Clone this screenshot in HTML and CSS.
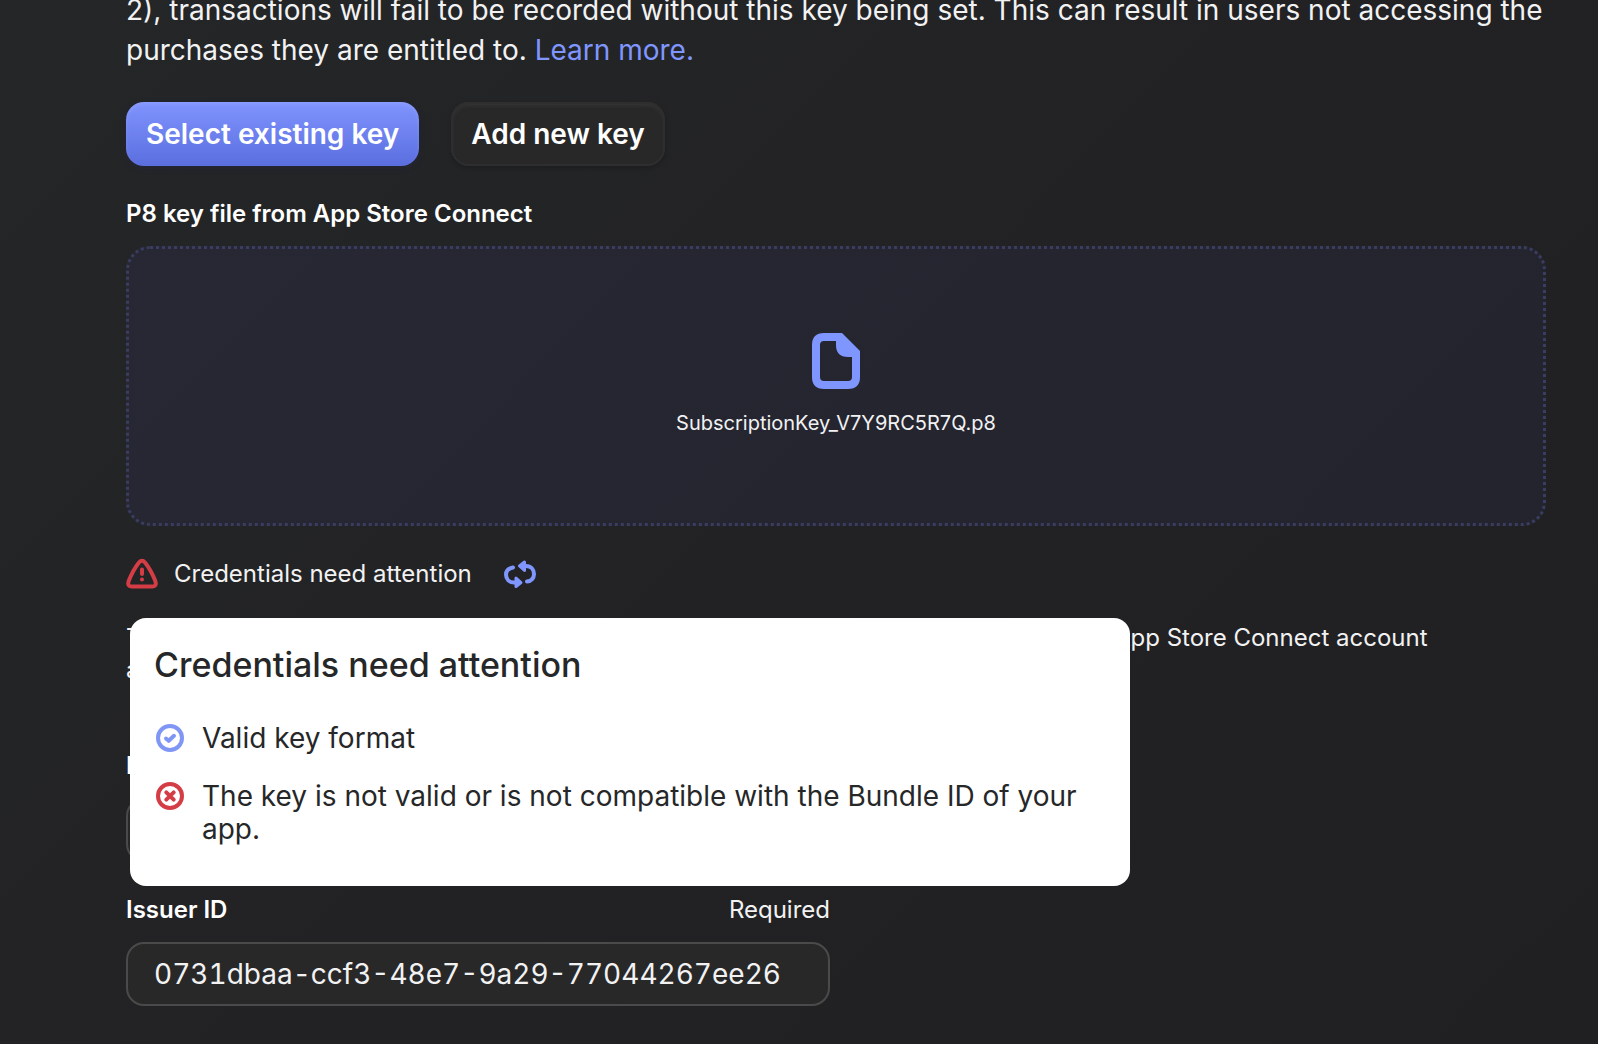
FILE: index.html
```html
<!DOCTYPE html>
<html lang="en">
<head>
<meta charset="UTF-8">
<meta name="viewport" content="width=device-width, initial-scale=1.0">
<title>In-app purchase key configuration</title>
<link rel="stylesheet" href="styles.css">
</head>
<body>

<main class="container">
    <p class="intro">2), transactions will fail to be recorded without this key being set. This can result in users not accessing the purchases they are entitled to. <a href="#learn-more">Learn more.</a></p>

    <div class="buttons">
        <button type="button" class="btn btn-primary">Select existing key</button>
        <button type="button" class="btn btn-secondary">Add new key</button>
    </div>

    <h3 class="label" id="fileLabel">P8 key file from App Store Connect</h3>
    <button type="button" class="dropzone" aria-describedby="fileLabel">
        <svg class="file-icon" width="48" height="56" viewBox="0 0 48 56" aria-hidden="true">
            <path fill="#8096ff" fill-rule="evenodd" d="M12 0H30L48 18V44Q48 56 36 56H12Q0 56 0 44V12Q0 0 12 0ZM12 8Q8 8 8 12V44Q8 48 12 48H36Q40 48 40 44V24H36Q24 24 24 12V8Z"/>
        </svg>
        <span>SubscriptionKey_V7Y9RC5R7Q.p8</span>
    </button>

    <div class="status">
        <svg width="32" height="32" viewBox="0 0 32 32" fill="none" stroke="#d43d46" stroke-width="4" stroke-linecap="round" stroke-linejoin="round" aria-hidden="true">
            <path d="M13 4.5Q16 1 19 4.5Q25 12 29.3 23Q31 28.500 26.500 28.500H5.500Q1 28.500 2.700 23Q7 12 13 4.500Z"/>
            <path d="M16 11.500V16M16 21.500V21.600"/>
        </svg>
        <span>Credentials need attention</span>
        <button type="button" class="refresh" aria-label="Check again">
            <svg width="32" height="32" viewBox="0 0 32 32" fill="none" stroke="#8096ff" stroke-width="4" stroke-linecap="round" stroke-linejoin="round" aria-hidden="true">
                <path d="M9 9.500C4.500 10.500 2 13 2 16.500C2 21 5 24.500 10 24.500H12M23 23.500C27.500 23 30 20 30 16C30 11.500 27 8 22 8H20"/>
                <path fill="#8096ff" stroke-width="3" d="M20.500 4L15.500 8L20.500 12.500ZM12 20L17 24.500L12 28.500Z"/>
            </svg>
        </button>

        <div class="tooltip" role="tooltip">
            <h2>Credentials need attention</h2>
            <ul>
                <li>
                    <svg width="32" height="32" viewBox="0 0 32 32" fill="none" stroke="#8096f5" stroke-width="4" stroke-linecap="round" stroke-linejoin="round" aria-hidden="true">
                        <circle cx="16" cy="16" r="12"/>
                        <path d="M12 16.500L14.700 18.800L20 13.800"/>
                    </svg>
                    <span>Valid key format</span>
                </li>
                <li>
                    <svg width="32" height="32" viewBox="0 0 32 32" fill="none" stroke="#d43d46" stroke-width="4" stroke-linecap="round" aria-hidden="true">
                        <circle cx="16" cy="16" r="12"/>
                        <path d="M12.300 12.300L19.700 19.700M19.700 12.300L12.300 19.700"/>
                    </svg>
                    <span>The key is not valid or is not compatible with the Bundle ID of your app.</span>
                </li>
            </ul>
        </div>
    </div>

    <p class="help">The Key ID is read from the name of the file, and the Issuer ID can be seen in your own App Store Connect account<br>and</p>

    <form class="fields">
        <div class="field-head"><label class="label" for="keyId">Key ID</label></div>
        <input type="text" id="keyId" name="keyId">

        <div class="field-head">
            <label class="label" for="issuerId">Issuer ID</label>
            <span>Required</span>
        </div>
        <input type="text" id="issuerId" name="issuerId" value="0731dbaa-ccf3-48e7-9a29-77044267ee26" required>
    </form>
</main>

</body>
</html>
```
FILE: styles.css
```css
* {
    box-sizing: border-box;
}

body {
    font-family: Inter, sans-serif;
    font-size: 24px;
    line-height: 32px;
    background: linear-gradient(135deg, #242628 0%, #222224 50%, #202022 100%);
    min-height: 100vh;
    color: #f2f2f3;
    margin: 0;
    overflow: hidden;
}

.container {
    padding: 0 52px 0 126px;
    margin-top: -10px;
}

.intro {
    margin: 0 0 32px;
    font-size: 28px;
    line-height: 40px;
}

a {
    color: #8096ff;
    text-decoration: none;
}

button {
    font-family: inherit;
    color: inherit;
    cursor: pointer;
}

.buttons {
    display: flex;
    gap: 32px;
    margin-bottom: 32px;
}

.btn {
    height: 64px;
    padding: 0 20px;
    border: none;
    border-radius: 18px;
    font-size: 28px;
    font-weight: 600;
    color: #fff;
}

.btn-primary {
    background: linear-gradient(#8094ff, #5b6edf);
    box-shadow: inset 0 2px 4px rgba(255, 255, 255, 0.1), 0 2px 6px rgba(40, 40, 90, 0.3);
}

.btn-secondary {
    background: #282828;
    box-shadow: inset 0 0 0 2px #2e2e2e, inset 0 3px 4px #383838, 0 2px 4px rgba(0, 0, 0, 0.2);
}

.label {
    margin: 0;
    font-size: 24px;
    font-weight: 600;
    color: #fff;
}

.dropzone {
    display: flex;
    flex-direction: column;
    align-items: center;
    justify-content: center;
    gap: 18px;
    width: 100%;
    height: 280px;
    margin: 16px 0 32px;
    background: rgba(64, 64, 160, 0.1);
    border: 3px dotted #3a3d60;
    border-radius: 24px;
    font-size: 20px;
    line-height: 32px;
}

.status {
    position: relative;
    display: flex;
    align-items: center;
    gap: 16px;
    height: 32px;
    margin-bottom: 32px;
}

.refresh {
    display: flex;
    padding: 0;
    margin-left: 16px;
    background: none;
    border: none;
}

.tooltip {
    position: absolute;
    top: 60px;
    left: 4px;
    width: 1000px;
    padding: 24px 24px 40px;
    background: #fff;
    border-radius: 16px;
    color: #262728;
}

.tooltip h2 {
    margin: 0 0 34px;
    font-size: 34px;
    line-height: 46px;
    font-weight: 500;
}

.tooltip ul {
    display: grid;
    gap: 25px;
    margin: 0;
    padding: 0;
    list-style: none;
}

.tooltip li {
    display: flex;
    gap: 16px;
    font-size: 28px;
    line-height: 33px;
}

.tooltip svg {
    flex: none;
}

.help {
    margin: 0 0 64px;
}

.fields {
    width: 50%;
    max-width: 704px;
}

.field-head {
    display: flex;
    justify-content: space-between;
    margin-bottom: 16px;
}

input {
    display: block;
    width: 100%;
    height: 64px;
    margin-bottom: 32px;
    padding: 0 26px;
    background: #282828;
    border: 2px solid #4a4a4b;
    border-radius: 18px;
    font-family: inherit;
    font-size: 28px;
    font-variant-numeric: tabular-nums;
    color: #f2f2f3;
}
```
